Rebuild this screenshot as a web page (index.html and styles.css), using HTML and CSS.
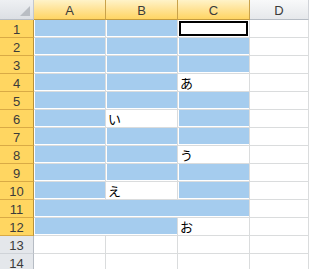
FILE: index.html
```html
<!DOCTYPE html>
<html lang="ja">
<head>
<meta charset="utf-8">
<link rel="stylesheet" href="styles.css">
</head>
<body>
<div class="sheet">
  <div class="corner"><span class="tri"></span></div>
  <div class="ch sel">A</div>
  <div class="ch sel">B</div>
  <div class="ch sel">C</div>
  <div class="ch">D</div>

  <div class="rh sel">1</div>
  <div class="c"><div class="f"></div></div><div class="c"><div class="f"></div></div><div class="c"><div class="active"></div></div><div class="c"></div>

  <div class="rh sel">2</div>
  <div class="c"><div class="f"></div></div><div class="c"><div class="f"></div></div><div class="c"><div class="f"></div></div><div class="c"></div>

  <div class="rh sel">3</div>
  <div class="c"><div class="f"></div></div><div class="c"><div class="f"></div></div><div class="c"><div class="f"></div></div><div class="c"></div>

  <div class="rh sel">4</div>
  <div class="c"><div class="f"></div></div><div class="c"><div class="f"></div></div><div class="c"><span class="t">あ</span></div><div class="c"></div>

  <div class="rh sel">5</div>
  <div class="c"><div class="f"></div></div><div class="c"><div class="f"></div></div><div class="c"><div class="f"></div></div><div class="c"></div>

  <div class="rh sel">6</div>
  <div class="c"><div class="f"></div></div><div class="c"><span class="t">い</span></div><div class="c"><div class="f"></div></div><div class="c"></div>

  <div class="rh sel">7</div>
  <div class="c"><div class="f"></div></div><div class="c"><div class="f"></div></div><div class="c"><div class="f"></div></div><div class="c"></div>

  <div class="rh sel">8</div>
  <div class="c"><div class="f"></div></div><div class="c"><div class="f"></div></div><div class="c"><span class="t">う</span></div><div class="c"></div>

  <div class="rh sel">9</div>
  <div class="c"><div class="f"></div></div><div class="c"><div class="f"></div></div><div class="c"><div class="f"></div></div><div class="c"></div>

  <div class="rh sel">10</div>
  <div class="c"><div class="f"></div></div><div class="c"><span class="t">え</span></div><div class="c"><div class="f"></div></div><div class="c"></div>

  <div class="rh sel">11</div>
  <div class="c span3"><div class="f"></div></div><div class="c"></div>

  <div class="rh sel">12</div>
  <div class="c span2"><div class="f"></div></div><div class="c"><span class="t">お</span></div><div class="c"></div>

  <div class="rh">13</div>
  <div class="c"></div><div class="c"></div><div class="c"></div><div class="c"></div>

  <div class="rh">14</div>
  <div class="c"></div><div class="c"></div><div class="c"></div><div class="c"></div>
</div>
</body>
</html>
```

FILE: styles.css
```css
html, body {
  margin: 0;
  padding: 0;
  background: #ffffff;
  overflow: hidden;
}

.sheet {
  display: grid;
  grid-template-columns: 34px 72px 72px 72px 59px;
  grid-template-rows: 20px repeat(14, 18px);
  font-family: "Liberation Sans", Arial, sans-serif;
  font-size: 13px;
  color: #333333;
}

.corner {
  position: relative;
  box-sizing: border-box;
  background: linear-gradient(#eef0f3, #dcdfe4);
  border-right: 1px solid #c4c8ce;
  border-bottom: 1px solid #b6bcc4;
}

.tri {
  position: absolute;
  right: 3px;
  bottom: 3px;
  width: 0;
  height: 0;
  border-left: 10px solid transparent;
  border-bottom: 10px solid #b9bdc3;
}

.ch {
  box-sizing: border-box;
  display: flex;
  align-items: center;
  justify-content: center;
  padding-top: 1px;
  background: linear-gradient(#f8f9fa, #e6e8eb);
  border-right: 1px solid #d0d3d8;
  border-bottom: 1px solid #b6bcc4;
  color: #3b3b3b;
}

.ch.sel {
  background: linear-gradient(#fff3c8 0%, #ffe49a 45%, #ffd563 100%);
  border-right: 1px solid #c9a24a;
  border-bottom: 1px solid #c49b3e;
}

.rh {
  box-sizing: border-box;
  display: flex;
  align-items: center;
  justify-content: center;
  padding-top: 1px;
  background: #e4e7eb;
  border-right: 1px solid #b6bcc4;
  border-bottom: 1px solid #cfd3d8;
  color: #3b3b3b;
}

.rh.sel {
  background: #ffd661;
  border-right: 1px solid #b8913a;
  border-bottom: 1px solid #d9aa45;
}

.c {
  box-sizing: border-box;
  display: flex;
  align-items: flex-end;
  border-right: 1px solid #dadcdd;
  border-bottom: 1px solid #dadcdd;
}

.span3 { grid-column: span 3; }
.span2 { grid-column: span 2; }

.f {
  flex: 1;
  align-self: stretch;
  margin: 0 0 1px 1px;
  background: #a5ccee;
}

.active {
  flex: 1;
  align-self: stretch;
  margin: 1px;
  box-sizing: border-box;
  border: 2px solid #000000;
  background: #ffffff;
}

.t {
  padding-left: 2px;
  font-family: "Noto Sans CJK JP", sans-serif;
  font-size: 13px;
  line-height: 16px;
  color: #000000;
}
```
